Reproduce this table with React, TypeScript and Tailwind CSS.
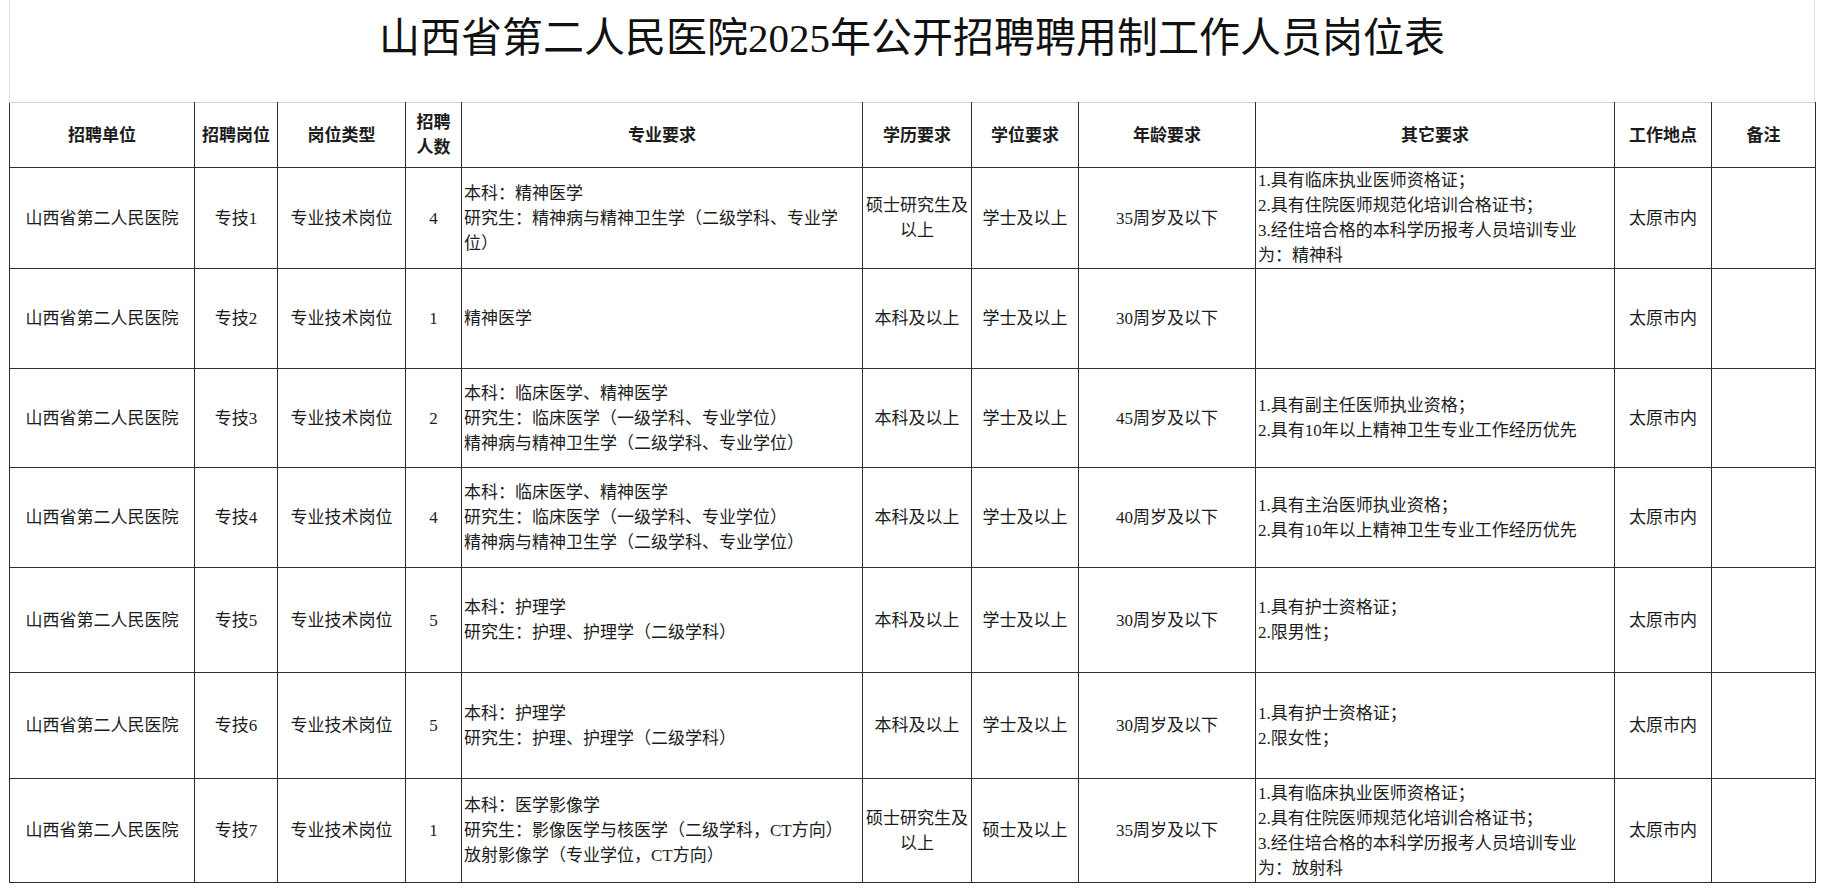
import React from "react"

type Row = {
  pos: string
  num: string
  major: string[]
  edu: string[]
  degree: string
  age: string
  other: string[]
  h: string
}

const headers: string[][] = [
  ["招聘单位"],
  ["招聘岗位"],
  ["岗位类型"],
  ["招聘", "人数"],
  ["专业要求"],
  ["学历要求"],
  ["学位要求"],
  ["年龄要求"],
  ["其它要求"],
  ["工作地点"],
  ["备注"],
]

const rows: Row[] = [
  {
    pos: "专技1",
    num: "4",
    major: ["本科：精神医学", "研究生：精神病与精神卫生学（二级学科、专业学", "位）"],
    edu: ["硕士研究生及", "以上"],
    degree: "学士及以上",
    age: "35周岁及以下",
    other: [
      "1.具有临床执业医师资格证；",
      "2.具有住院医师规范化培训合格证书；",
      "3.经住培合格的本科学历报考人员培训专业",
      "为：精神科",
    ],
    h: "h-[100px]",
  },
  {
    pos: "专技2",
    num: "1",
    major: ["精神医学"],
    edu: ["本科及以上"],
    degree: "学士及以上",
    age: "30周岁及以下",
    other: [],
    h: "h-[100px]",
  },
  {
    pos: "专技3",
    num: "2",
    major: ["本科：临床医学、精神医学", "研究生：临床医学（一级学科、专业学位）", "精神病与精神卫生学（二级学科、专业学位）"],
    edu: ["本科及以上"],
    degree: "学士及以上",
    age: "45周岁及以下",
    other: ["1.具有副主任医师执业资格；", "2.具有10年以上精神卫生专业工作经历优先"],
    h: "h-[99px]",
  },
  {
    pos: "专技4",
    num: "4",
    major: ["本科：临床医学、精神医学", "研究生：临床医学（一级学科、专业学位）", "精神病与精神卫生学（二级学科、专业学位）"],
    edu: ["本科及以上"],
    degree: "学士及以上",
    age: "40周岁及以下",
    other: ["1.具有主治医师执业资格；", "2.具有10年以上精神卫生专业工作经历优先"],
    h: "h-[100px]",
  },
  {
    pos: "专技5",
    num: "5",
    major: ["本科：护理学", "研究生：护理、护理学（二级学科）"],
    edu: ["本科及以上"],
    degree: "学士及以上",
    age: "30周岁及以下",
    other: ["1.具有护士资格证；", "2.限男性；"],
    h: "h-[105px]",
  },
  {
    pos: "专技6",
    num: "5",
    major: ["本科：护理学", "研究生：护理、护理学（二级学科）"],
    edu: ["本科及以上"],
    degree: "学士及以上",
    age: "30周岁及以下",
    other: ["1.具有护士资格证；", "2.限女性；"],
    h: "h-[106px]",
  },
  {
    pos: "专技7",
    num: "1",
    major: ["本科：医学影像学", "研究生：影像医学与核医学（二级学科，CT方向）", "放射影像学（专业学位，CT方向）"],
    edu: ["硕士研究生及", "以上"],
    degree: "硕士及以上",
    age: "35周岁及以下",
    other: [
      "1.具有临床执业医师资格证；",
      "2.具有住院医师规范化培训合格证书；",
      "3.经住培合格的本科学历报考人员培训专业",
      "为：放射科",
    ],
    h: "h-[104px]",
  },
]

const cell = "border border-[#2f2f2f] align-middle p-0"

function Lines({ lines }: { lines: string[] }) {
  return (
    <>
      {lines.map((l, i) => (
        <div key={i} className="whitespace-nowrap">
          {l}
        </div>
      ))}
    </>
  )
}

export default function App() {
  return (
    <div className="min-h-screen bg-white text-[#1c1c1c] [font-family:'Liberation_Serif','Noto_Sans_CJK_SC',sans-serif]">
      <div className="ml-[9px] w-[1806px]">
        {/* title */}
        <div className="h-[102px] border-x border-[#dedede] pt-[18px] text-center text-[41px] leading-none font-normal text-[#111]">
          山西省第二人民医院2025年公开招聘聘用制工作人员岗位表
        </div>

        <table className="w-[1806px] table-fixed border-collapse text-[17px] leading-[25px]">
          <colgroup>
            <col className="w-[185px]" />
            <col className="w-[83px]" />
            <col className="w-[128px]" />
            <col className="w-[56px]" />
            <col className="w-[401px]" />
            <col className="w-[109px]" />
            <col className="w-[107px]" />
            <col className="w-[177px]" />
            <col className="w-[359px]" />
            <col className="w-[97px]" />
            <col className="w-[104px]" />
          </colgroup>
          <thead>
            <tr className="h-[65px]">
              {headers.map((h, i) => (
                <th key={i} className={`${cell} border-t-[#d2d2d2] text-center font-bold`}>
                  <Lines lines={h} />
                </th>
              ))}
            </tr>
          </thead>
          <tbody>
            {rows.map((r) => (
              <tr key={r.pos} className={r.h}>
                <td className={`${cell} text-center`}>山西省第二人民医院</td>
                <td className={`${cell} text-center`}>{r.pos}</td>
                <td className={`${cell} text-center`}>专业技术岗位</td>
                <td className={`${cell} text-center`}>{r.num}</td>
                <td className={`${cell} pl-[2px] text-left`}>
                  <Lines lines={r.major} />
                </td>
                <td className={`${cell} text-center`}>
                  <Lines lines={r.edu} />
                </td>
                <td className={`${cell} text-center`}>{r.degree}</td>
                <td className={`${cell} text-center`}>{r.age}</td>
                <td className={`${cell} pl-[2px] text-left`}>
                  <Lines lines={r.other} />
                </td>
                <td className={`${cell} text-center`}>太原市内</td>
                <td className={cell}></td>
              </tr>
            ))}
          </tbody>
        </table>
      </div>
    </div>
  )
}
